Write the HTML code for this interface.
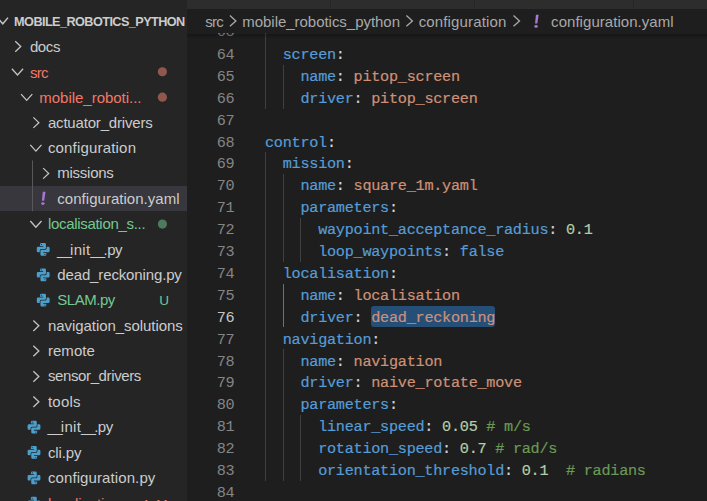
<!DOCTYPE html>
<html><head><meta charset="utf-8"><title>configuration.yaml</title>
<style>
html,body{margin:0;padding:0;background:#1e1e1e;}
body{width:707px;height:501px;overflow:hidden;position:relative;font-family:"Liberation Sans",sans-serif;}
#sb{position:absolute;left:0;top:0;width:187px;height:501px;background:#252526;overflow:hidden;}
.r{position:absolute;left:0;width:187px;height:25.38px;line-height:25.38px;font-size:15px;white-space:pre;}
.r span{position:absolute;top:0;}
.sel{background:#37373d;}
#tabs{position:absolute;left:187px;top:0;right:0;height:8.5px;background:#2d2d2d;}
#tabs i{position:absolute;top:0;width:1px;height:100%;background:#252526;}
#bc{position:absolute;left:187px;top:8.5px;right:0;height:24.8px;background:#1e1e1e;color:#a9a9a9;font-size:15px;line-height:24.8px;white-space:pre;z-index:3;}
#bc span{position:absolute;top:1px;}
#shadow{position:absolute;left:187px;right:0;top:33.8px;height:5px;background:linear-gradient(rgba(0,0,0,.28),rgba(0,0,0,0));z-index:4;}
#ed{position:absolute;left:187px;top:0;right:0;height:501px;overflow:hidden;font-family:"Liberation Mono",monospace;font-size:15.20px;letter-spacing:-0.262px;}
.l{position:absolute;left:0;right:0;height:21.88px;line-height:21.88px;white-space:pre;color:#d4d4d4;}
.l b{font-weight:normal;position:absolute;right:472.6px;top:2.2px;color:#858585;letter-spacing:-0.262px;}
.l b.a{color:#c6c6c6;}
.l code{-webkit-text-stroke:0.2px;font:inherit;position:absolute;left:78.00px;top:2.2px;}
.k{color:#569cd6}.s{color:#ce9178}.n{color:#b5cea8}.c{color:#6a9955}
.g{position:absolute;width:1px;background:#404040;}
.g.a{background:#707070;}
#selbox{position:absolute;background:#264f78;border-radius:3px;}
svg{position:absolute;left:0;top:0;}
</style></head><body>

<div id="sb">
<div class="r" style="top:8.12px;font:bold 12.7px 'Liberation Sans';line-height:25.38px;color:#cccccc"><span style="left:14.1px;top:2px;letter-spacing:-0.576px">MOBILE_ROBOTICS_PYTHON</span></div>
<div class="r" style="top:33.50px;color:#cccccc"><span style="left:29.9px;top:0px;letter-spacing:-0.368px">docs</span></div>
<div class="r" style="top:58.88px;color:#f37866"><span style="left:29.9px;top:1px;letter-spacing:-0.640px">src</span></div>
<div class="r" style="top:84.26px;color:#f37866"><span style="left:39.3px;top:1px;letter-spacing:-0.023px">mobile_roboti...</span></div>
<div class="r" style="top:109.64px;color:#cccccc"><span style="left:47.9px;top:0px;letter-spacing:-0.178px">actuator_drivers</span></div>
<div class="r" style="top:135.02px;color:#cccccc"><span style="left:47.9px;top:0px;letter-spacing:0.183px">configuration</span></div>
<div class="r" style="top:160.40px;color:#cccccc"><span style="left:57.3px;top:0px;letter-spacing:-0.261px">missions</span></div>
<div class="r sel" style="top:185.78px;color:#cccccc"><span style="left:57.3px;top:0px;letter-spacing:0.032px">configuration.yaml</span></div>
<div class="r" style="top:211.16px;color:#73c991"><span style="left:47.9px;top:0px;letter-spacing:-0.301px">localisation_s...</span></div>
<div class="r" style="top:236.54px;color:#cccccc"><span style="left:56.90px;top:0px;letter-spacing:-1.744px">__</span><span style="left:70.10px;top:0px;letter-spacing:0.289px">init</span><span style="left:90.20px;top:0px;letter-spacing:-1.844px">__</span><span style="left:103.50px;top:0px;letter-spacing:-0.526px">.py</span></div>
<div class="r" style="top:261.92px;color:#cccccc"><span style="left:57.3px;top:0px;letter-spacing:-0.137px">dead_reckoning.py</span></div>
<div class="r" style="top:287.30px;color:#73c991"><span style="left:57.3px;top:0px;letter-spacing:-0.471px">SLAM.py</span><span style="left:159.3px;top:1px;font-size:13.5px">U</span></div>
<div class="r" style="top:312.68px;color:#cccccc"><span style="left:47.9px;top:0px;letter-spacing:-0.053px">navigation_solutions</span></div>
<div class="r" style="top:338.06px;color:#cccccc"><span style="left:47.9px;top:0px;letter-spacing:0.057px">remote</span></div>
<div class="r" style="top:363.44px;color:#cccccc"><span style="left:47.9px;top:0px;letter-spacing:-0.376px">sensor_drivers</span></div>
<div class="r" style="top:388.82px;color:#cccccc"><span style="left:47.9px;top:0px;letter-spacing:0.247px">tools</span></div>
<div class="r" style="top:414.20px;color:#cccccc"><span style="left:47.60px;top:0px;letter-spacing:-1.744px">__</span><span style="left:60.80px;top:0px;letter-spacing:0.289px">init</span><span style="left:80.90px;top:0px;letter-spacing:-1.844px">__</span><span style="left:94.20px;top:0px;letter-spacing:-0.526px">.py</span></div>
<div class="r" style="top:439.58px;color:#cccccc"><span style="left:47.9px;top:0px;letter-spacing:-0.107px">cli.py</span></div>
<div class="r" style="top:464.96px;color:#cccccc"><span style="left:47.9px;top:0px;letter-spacing:0.103px">configuration.py</span></div>
<div class="r" style="top:490.34px;color:#f37866"><span style="left:47.9px;top:1px;letter-spacing:-0.112px">localisation.py</span><span style="left:141.2px;top:1.5px;font-size:13.5px">4, M</span></div>
<svg width="187" height="501" viewBox="0 0 187 501"><polyline points="-2.80,17.61 2.80,23.81 8.00,17.61" fill="none" stroke="#c5c5c5" stroke-width="1.5"/><polyline points="15.25,41.24 20.75,46.49 15.25,51.74" fill="none" stroke="#c5c5c5" stroke-width="1.3"/><polyline points="11.90,68.77 17.50,74.97 23.10,68.77" fill="none" stroke="#c5c5c5" stroke-width="1.3"/><circle cx="162.4" cy="71.77" r="4.6" fill="#f48771" opacity="0.52"/><polyline points="21.10,94.15 26.70,100.35 32.30,94.15" fill="none" stroke="#c5c5c5" stroke-width="1.3"/><circle cx="162.4" cy="97.15" r="4.6" fill="#f48771" opacity="0.52"/><polyline points="33.35,117.38 38.85,122.63 33.35,127.88" fill="none" stroke="#c5c5c5" stroke-width="1.3"/><polyline points="30.30,144.91 35.90,151.11 41.50,144.91" fill="none" stroke="#c5c5c5" stroke-width="1.3"/><polyline points="43.15,168.14 48.65,173.39 43.15,178.64" fill="none" stroke="#c5c5c5" stroke-width="1.3"/><path d="M42.80 191.87L45.50 191.87L44.20 200.77L41.90 200.77Z" fill="#a877d4"/><ellipse cx="42.90" cy="203.57" rx="1.75" ry="1.4" fill="#a877d4"/><polyline points="30.30,221.05 35.90,227.25 41.50,221.05" fill="none" stroke="#c5c5c5" stroke-width="1.3"/><circle cx="162.4" cy="224.05" r="4.6" fill="#73c991" opacity="0.52"/><g transform="translate(36.80,243.03) scale(0.9846)" fill="#4d9fcb"><path d="M3.3 2.9L3.3 1.3Q3.3 0 4.6 0L8 0Q9.3 0 9.3 1.3L9.3 4.8Q9.3 6.1 8 6.1L4.6 6.100Q3 6.100 3 7.700L3 9.300L1.300 9.300Q0 9.300 0 8L0 5Q0 3.700 1.300 3.700L6.500 3.700L6.500 2.900Z"/><circle cx="4.7" cy="1.45" r="0.55" fill="#252526"/><g transform="rotate(180 6.5 6.5)"><path d="M3.3 2.9L3.3 1.3Q3.3 0 4.6 0L8 0Q9.3 0 9.3 1.3L9.3 4.8Q9.3 6.1 8 6.1L4.6 6.100Q3 6.100 3 7.700L3 9.300L1.300 9.300Q0 9.300 0 8L0 5Q0 3.700 1.300 3.700L6.500 3.700L6.500 2.900Z"/><circle cx="4.7" cy="1.45" r="0.55" fill="#252526"/></g></g><g transform="translate(36.80,268.41) scale(0.9846)" fill="#4d9fcb"><path d="M3.3 2.9L3.3 1.3Q3.3 0 4.6 0L8 0Q9.3 0 9.3 1.3L9.3 4.8Q9.3 6.1 8 6.1L4.6 6.100Q3 6.100 3 7.700L3 9.300L1.300 9.300Q0 9.300 0 8L0 5Q0 3.700 1.300 3.700L6.500 3.700L6.500 2.900Z"/><circle cx="4.7" cy="1.45" r="0.55" fill="#252526"/><g transform="rotate(180 6.5 6.5)"><path d="M3.3 2.9L3.3 1.3Q3.3 0 4.6 0L8 0Q9.3 0 9.3 1.3L9.3 4.8Q9.3 6.1 8 6.1L4.6 6.100Q3 6.100 3 7.700L3 9.300L1.300 9.300Q0 9.300 0 8L0 5Q0 3.700 1.300 3.700L6.500 3.700L6.500 2.900Z"/><circle cx="4.7" cy="1.45" r="0.55" fill="#252526"/></g></g><g transform="translate(36.80,293.79) scale(0.9846)" fill="#4d9fcb"><path d="M3.3 2.9L3.3 1.3Q3.3 0 4.6 0L8 0Q9.3 0 9.3 1.3L9.3 4.8Q9.3 6.1 8 6.1L4.6 6.100Q3 6.100 3 7.700L3 9.300L1.300 9.300Q0 9.300 0 8L0 5Q0 3.700 1.300 3.700L6.500 3.700L6.500 2.900Z"/><circle cx="4.7" cy="1.45" r="0.55" fill="#252526"/><g transform="rotate(180 6.5 6.5)"><path d="M3.3 2.9L3.3 1.3Q3.3 0 4.6 0L8 0Q9.3 0 9.3 1.3L9.3 4.8Q9.3 6.1 8 6.1L4.6 6.100Q3 6.100 3 7.700L3 9.300L1.300 9.300Q0 9.300 0 8L0 5Q0 3.700 1.300 3.700L6.500 3.700L6.500 2.900Z"/><circle cx="4.7" cy="1.45" r="0.55" fill="#252526"/></g></g><polyline points="33.35,320.42 38.85,325.67 33.35,330.92" fill="none" stroke="#c5c5c5" stroke-width="1.3"/><polyline points="33.35,345.80 38.85,351.05 33.35,356.30" fill="none" stroke="#c5c5c5" stroke-width="1.3"/><polyline points="33.35,371.18 38.85,376.43 33.35,381.68" fill="none" stroke="#c5c5c5" stroke-width="1.3"/><polyline points="33.35,396.56 38.85,401.81 33.35,407.06" fill="none" stroke="#c5c5c5" stroke-width="1.3"/><g transform="translate(27.60,420.69) scale(0.9846)" fill="#4d9fcb"><path d="M3.3 2.9L3.3 1.3Q3.3 0 4.6 0L8 0Q9.3 0 9.3 1.3L9.3 4.8Q9.3 6.1 8 6.1L4.6 6.100Q3 6.100 3 7.700L3 9.300L1.300 9.300Q0 9.300 0 8L0 5Q0 3.700 1.300 3.700L6.500 3.700L6.500 2.900Z"/><circle cx="4.7" cy="1.45" r="0.55" fill="#252526"/><g transform="rotate(180 6.5 6.5)"><path d="M3.3 2.9L3.3 1.3Q3.3 0 4.6 0L8 0Q9.3 0 9.3 1.3L9.3 4.8Q9.3 6.1 8 6.1L4.6 6.100Q3 6.100 3 7.700L3 9.300L1.300 9.300Q0 9.300 0 8L0 5Q0 3.700 1.300 3.700L6.500 3.700L6.500 2.900Z"/><circle cx="4.7" cy="1.45" r="0.55" fill="#252526"/></g></g><g transform="translate(27.60,446.07) scale(0.9846)" fill="#4d9fcb"><path d="M3.3 2.9L3.3 1.3Q3.3 0 4.6 0L8 0Q9.3 0 9.3 1.3L9.3 4.8Q9.3 6.1 8 6.1L4.6 6.100Q3 6.100 3 7.700L3 9.300L1.300 9.300Q0 9.300 0 8L0 5Q0 3.700 1.300 3.700L6.500 3.700L6.500 2.900Z"/><circle cx="4.7" cy="1.45" r="0.55" fill="#252526"/><g transform="rotate(180 6.5 6.5)"><path d="M3.3 2.9L3.3 1.3Q3.3 0 4.6 0L8 0Q9.3 0 9.3 1.3L9.3 4.8Q9.3 6.1 8 6.1L4.6 6.100Q3 6.100 3 7.700L3 9.300L1.300 9.300Q0 9.300 0 8L0 5Q0 3.700 1.300 3.700L6.500 3.700L6.500 2.900Z"/><circle cx="4.7" cy="1.45" r="0.55" fill="#252526"/></g></g><g transform="translate(27.60,471.45) scale(0.9846)" fill="#4d9fcb"><path d="M3.3 2.9L3.3 1.3Q3.3 0 4.6 0L8 0Q9.3 0 9.3 1.3L9.3 4.8Q9.3 6.1 8 6.1L4.6 6.100Q3 6.100 3 7.700L3 9.300L1.300 9.300Q0 9.300 0 8L0 5Q0 3.700 1.300 3.700L6.500 3.700L6.500 2.900Z"/><circle cx="4.7" cy="1.45" r="0.55" fill="#252526"/><g transform="rotate(180 6.5 6.5)"><path d="M3.3 2.9L3.3 1.3Q3.3 0 4.6 0L8 0Q9.3 0 9.3 1.3L9.3 4.8Q9.3 6.1 8 6.1L4.6 6.100Q3 6.100 3 7.700L3 9.300L1.300 9.300Q0 9.300 0 8L0 5Q0 3.700 1.300 3.700L6.500 3.700L6.500 2.900Z"/><circle cx="4.7" cy="1.45" r="0.55" fill="#252526"/></g></g><g transform="translate(27.60,496.83) scale(0.9846)" fill="#4d9fcb"><path d="M3.3 2.9L3.3 1.3Q3.3 0 4.6 0L8 0Q9.3 0 9.3 1.3L9.3 4.8Q9.3 6.1 8 6.1L4.6 6.100Q3 6.100 3 7.700L3 9.300L1.300 9.300Q0 9.300 0 8L0 5Q0 3.700 1.300 3.700L6.500 3.700L6.500 2.900Z"/><circle cx="4.7" cy="1.45" r="0.55" fill="#252526"/><g transform="rotate(180 6.5 6.5)"><path d="M3.3 2.9L3.3 1.3Q3.3 0 4.6 0L8 0Q9.3 0 9.3 1.3L9.3 4.8Q9.3 6.1 8 6.1L4.6 6.100Q3 6.100 3 7.700L3 9.300L1.300 9.300Q0 9.300 0 8L0 5Q0 3.700 1.300 3.700L6.500 3.700L6.500 2.900Z"/><circle cx="4.7" cy="1.45" r="0.55" fill="#252526"/></g></g><rect x="32" y="160.40" width="1" height="50.76" fill="#585858"/></svg>
</div>
<div id="tabs"><i style="left:143px"></i><i style="left:287px"></i><i style="left:446px"></i></div>
<div id="bc">
<span style="left:18.2px;letter-spacing:-0.760px">src</span>
<span style="left:55.3px;letter-spacing:-0.034px">mobile_robotics_python</span>
<span style="left:231.7px;letter-spacing:0.143px">configuration</span>
<span style="left:364.1px;letter-spacing:0.044px">configuration.yaml</span>
<svg width="520" height="25" viewBox="0 0 520 25"><polyline points="42.90,6.50 48.90,11.90 42.90,17.30" fill="none" stroke="#a9a9a9" stroke-width="1.3"/><polyline points="219.40,6.50 225.40,11.90 219.40,17.30" fill="none" stroke="#a9a9a9" stroke-width="1.3"/><polyline points="326.50,6.50 332.50,11.90 326.50,17.30" fill="none" stroke="#a9a9a9" stroke-width="1.3"/><path d="M348.95 5.70L351.65 5.70L350.35 14.60L348.05 14.60Z" fill="#a877d4"/><ellipse cx="349.05" cy="17.40" rx="1.75" ry="1.4" fill="#a877d4"/></svg>
</div><div id="shadow"></div>
<div id="ed">
<div class="g" style="left:78px;top:21.12px;height:87.52px"></div>
<div class="g" style="left:96px;top:64.88px;height:43.76px"></div>
<div class="g" style="left:78px;top:152.40px;height:328.20px"></div>
<div class="g" style="left:96px;top:174.28px;height:87.52px"></div>
<div class="g" style="left:113px;top:218.04px;height:43.76px"></div>
<div class="g a" style="left:96px;top:283.68px;height:43.76px"></div>
<div class="g" style="left:96px;top:349.32px;height:131.28px"></div>
<div class="g" style="left:113px;top:414.96px;height:65.64px"></div>
<div id="selbox" style="left:183.82px;top:305.56px;width:124.54px;height:21.68px"></div>
<div class="l" style="top:20.12px"><b>63</b><code></code></div>
<div class="l" style="top:43.00px"><b>64</b><code>  <span class="k">screen</span>:</code></div>
<div class="l" style="top:64.88px"><b>65</b><code>    <span class="k">name</span>: <span class="s">pitop_screen</span></code></div>
<div class="l" style="top:86.76px"><b>66</b><code>    <span class="k">driver</span>: <span class="s">pitop_screen</span></code></div>
<div class="l" style="top:108.64px"><b>67</b><code></code></div>
<div class="l" style="top:130.52px"><b>68</b><code><span class="k">control</span>:</code></div>
<div class="l" style="top:152.20px"><b>69</b><code>  <span class="k">mission</span>:</code></div>
<div class="l" style="top:174.28px"><b>70</b><code>    <span class="k">name</span>: <span class="s">square_1m.yaml</span></code></div>
<div class="l" style="top:196.16px"><b>71</b><code>    <span class="k">parameters</span>:</code></div>
<div class="l" style="top:218.04px"><b>72</b><code>      <span class="k">waypoint_acceptance_radius</span>: <span class="n">0.1</span></code></div>
<div class="l" style="top:239.92px"><b>73</b><code>      <span class="k">loop_waypoints</span>: <span class="k">false</span></code></div>
<div class="l" style="top:261.80px"><b>74</b><code>  <span class="k">localisation</span>:</code></div>
<div class="l" style="top:283.68px"><b>75</b><code>    <span class="k">name</span>: <span class="s">localisation</span></code></div>
<div class="l" style="top:305.56px"><b class="a">76</b><code>    <span class="k">driver</span>: <span class="s">dead_reckoning</span></code></div>
<div class="l" style="top:327.44px"><b>77</b><code>  <span class="k">navigation</span>:</code></div>
<div class="l" style="top:349.32px"><b>78</b><code>    <span class="k">name</span>: <span class="s">navigation</span></code></div>
<div class="l" style="top:371.20px"><b>79</b><code>    <span class="k">driver</span>: <span class="s">naive_rotate_move</span></code></div>
<div class="l" style="top:393.08px"><b>80</b><code>    <span class="k">parameters</span>:</code></div>
<div class="l" style="top:414.96px"><b>81</b><code>      <span class="k">linear_speed</span>: <span class="n">0.05</span> <span class="c"># m/s</span></code></div>
<div class="l" style="top:436.84px"><b>82</b><code>      <span class="k">rotation_speed</span>: <span class="n">0.7</span> <span class="c"># rad/s</span></code></div>
<div class="l" style="top:458.72px"><b>83</b><code>      <span class="k">orientation_threshold</span>: <span class="n">0.1</span>  <span class="c"># radians</span></code></div>
<div class="l" style="top:480.60px"><b>84</b><code></code></div>
</div>
</body></html>
